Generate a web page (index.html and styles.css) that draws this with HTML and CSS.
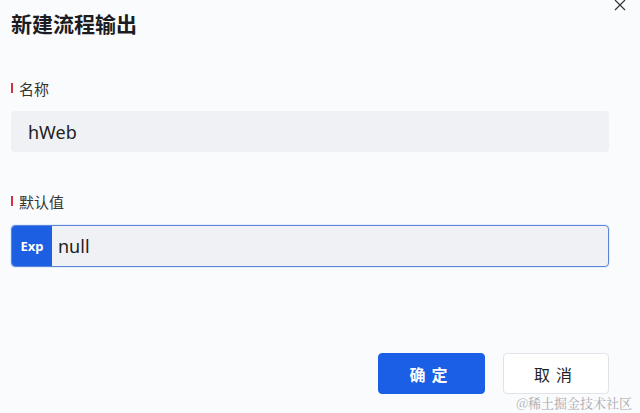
FILE: index.html
```html
<!DOCTYPE html>
<html lang="zh-CN">
<head>
  <meta charset="UTF-8" />
  <meta name="viewport" content="width=device-width, initial-scale=1.0" />
  <title>新建流程输出</title>
  <link rel="stylesheet" href="styles.css">
</head>
<body>
  <div class="dialog">
    <h1 class="title">新建流程输出</h1>
    <button class="close" aria-label="关闭">
      <svg width="12" height="12" viewBox="0 0 12 12"><path d="M1 1 L11 11 M11 1 L1 11" stroke="#333" stroke-width="1.2" fill="none"/></svg>
    </button>

    <div class="form">
      <label class="label">名称</label>
      <div class="field">hWeb</div>

      <label class="label label-second">默认值</label>
      <div class="field field-exp">
        <span class="exp">Exp</span>
        <span class="exp-value">null</span>
      </div>

      <div class="actions">
        <button class="btn btn-primary">确定</button>
        <button class="btn btn-default">取消</button>
      </div>
    </div>

    <div class="watermark">@稀土掘金技术社区</div>
  </div>
</body>
</html>
```

FILE: styles.css
```css
* {
  box-sizing: border-box;
}
body {
  margin: 0;
  background: #fafbfd;
  font-family: "Noto Sans", "Noto Sans CJK SC", sans-serif;
  color: #222;
}
.dialog {
  position: relative;
  width: 640px;
  height: 413px;
  padding: 0 0 0 11px;
  overflow: hidden;
}
.title {
  margin: 10px 0 0;
  font-size: 21px;
  line-height: 28px;
  font-weight: 700;
  color: #1c1c22;
}
.close {
  position: absolute;
  top: -1px;
  left: 614px;
  width: 12px;
  height: 12px;
  padding: 0;
  border: none;
  background: none;
}
.close svg {
  display: block;
}
.form {
  width: 598px;
  margin-top: 40px;
}
.label {
  display: flex;
  align-items: center;
  height: 20px;
  font-size: 15px;
  color: #333;
}
.label::before {
  content: "";
  width: 2px;
  height: 10px;
  margin-right: 6px;
  background: #d0353f;
}
.label-second {
  margin-top: 39px;
}
.field {
  display: flex;
  align-items: center;
  height: 41px;
  margin-top: 13px;
  padding-left: 17px;
  background: #f0f1f5;
  border-radius: 4px;
  font-size: 18px;
  color: #222;
}
.field-exp {
  height: 42px;
  margin-top: 14px;
  padding-left: 0;
  border: 1px solid #5b87d6;
  border-radius: 4px;
  overflow: hidden;
  box-shadow: 0 0 0 1px #e3ecfa;
}
.exp {
  display: flex;
  align-items: center;
  justify-content: center;
  width: 40px;
  height: 100%;
  background: #1c5fe2;
  color: #fff;
  font-size: 13px;
  font-weight: 700;
}
.exp-value {
  margin-left: 6px;
}
.actions {
  display: flex;
  justify-content: flex-end;
  gap: 18px;
  margin-top: 86px;
}
.btn {
  width: 107px;
  height: 41px;
  border-radius: 4px;
  font-family: "Noto Sans CJK SC", sans-serif;
  font-size: 16px;
  letter-spacing: 6px;
  padding-left: 6px;
}
.btn-primary {
  background: #1a5fe5;
  border: 1px solid #1a5fe5;
  color: #fff;
  font-weight: 700;
}
.btn-default {
  width: 106px;
  background: #fff;
  border: 1px solid #e1e3e8;
  color: #222;
}
.watermark {
  position: absolute;
  right: 8px;
  bottom: 1px;
  font-family: "Noto Serif CJK SC", "Noto Sans CJK SC", serif;
  font-size: 13px;
  color: #a9aab0;
}
```
